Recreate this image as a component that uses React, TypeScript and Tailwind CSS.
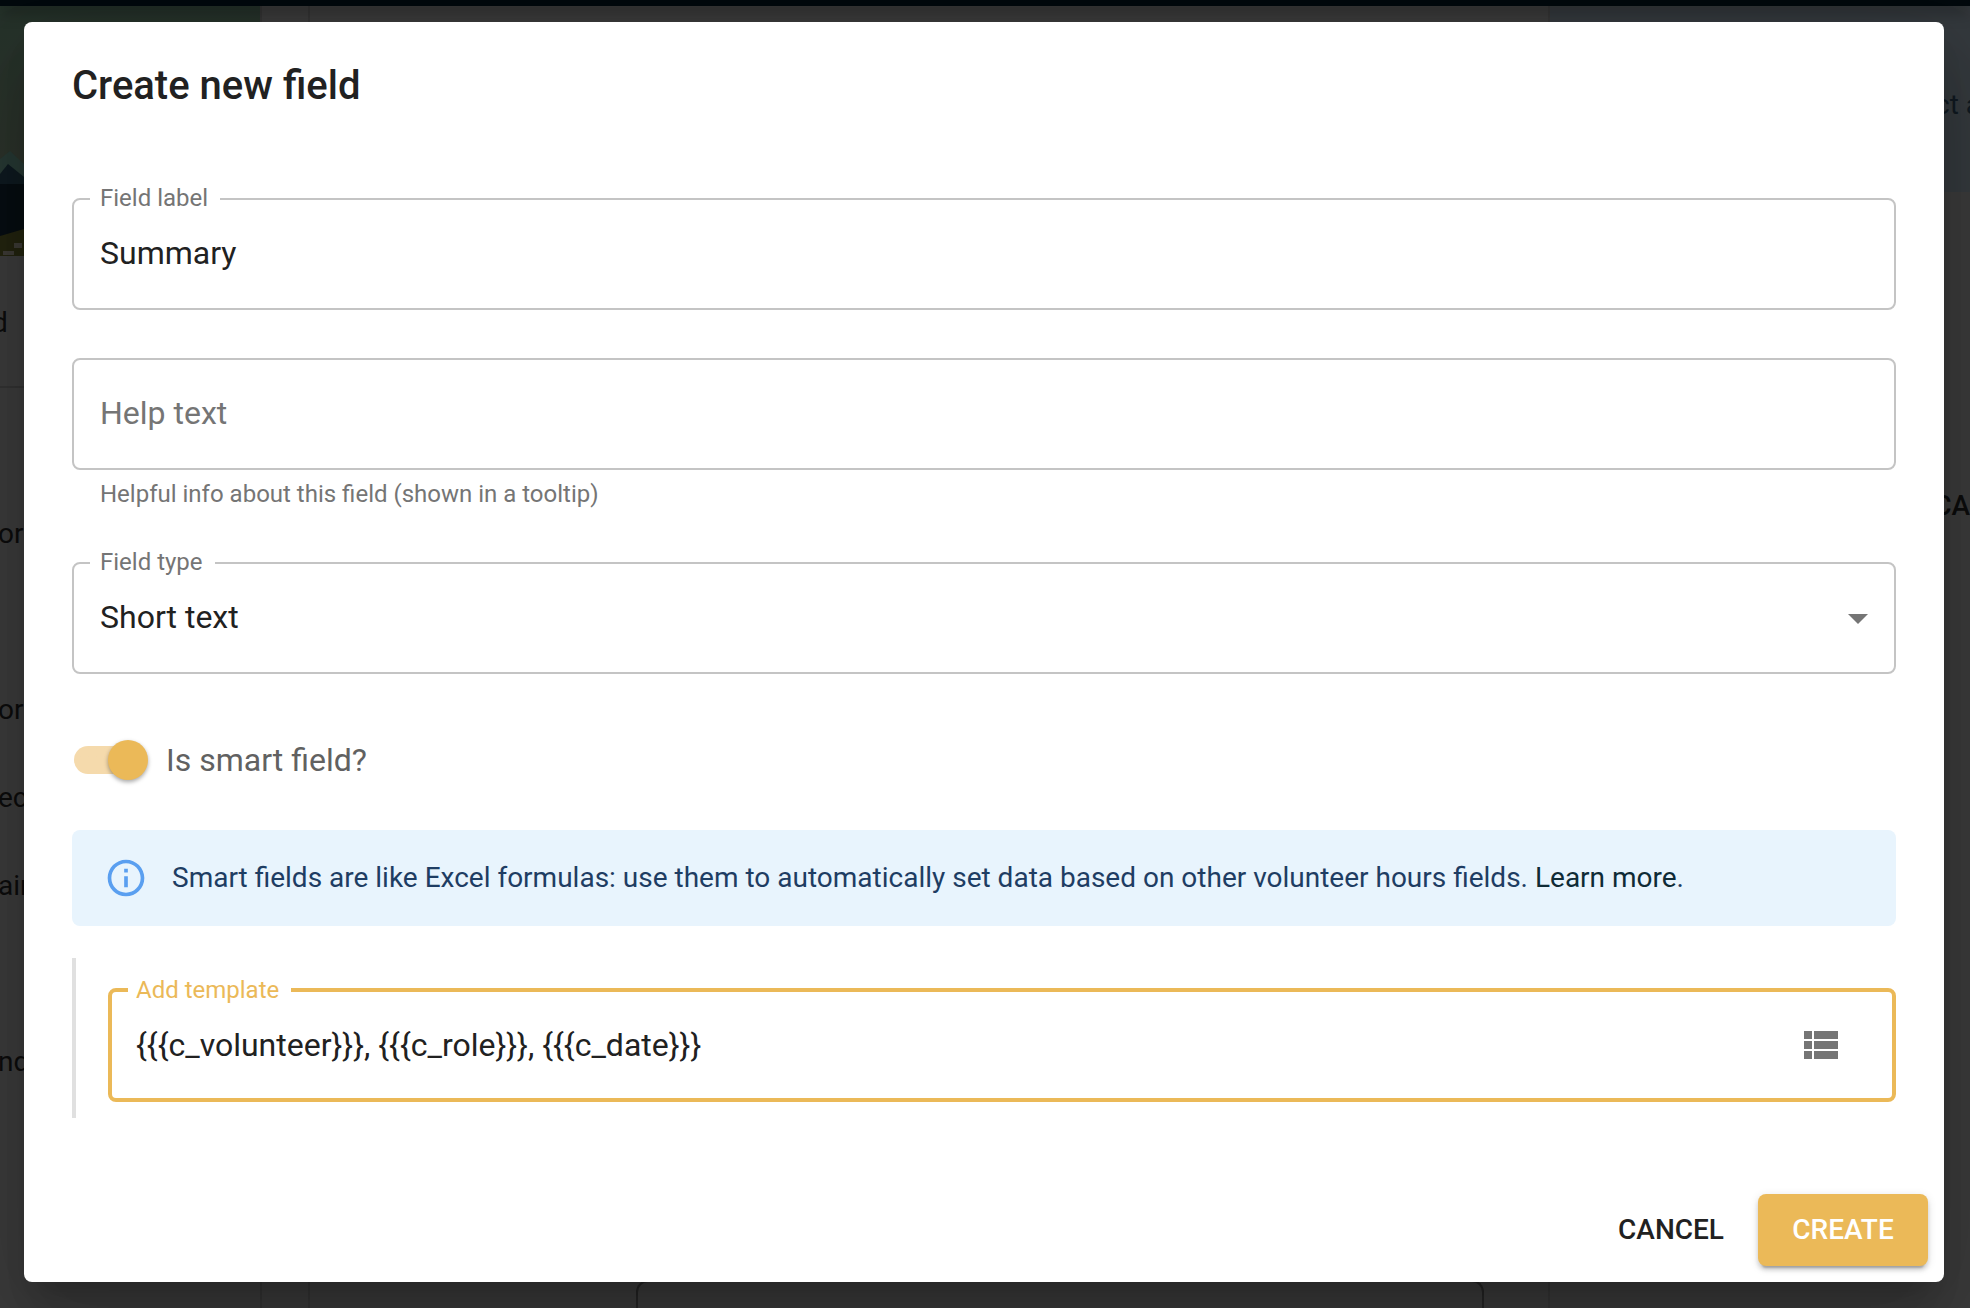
import { useState, type ReactNode } from "react";

const sidebarItems = ["or", "", "or", "ech", "air", "", "nd"];

function Backdrop() {
  return (
    <div aria-hidden="true" className="absolute inset-0 flex flex-col overflow-hidden bg-[#3c3c3c] text-[28px] text-[#0c0c0c]">
      <div className="z-10 h-1.5 shrink-0 bg-[#02090d] shadow-[0_4px_16px_rgba(0,0,0,0.5)]" />
      <div className="flex flex-1">
        <div className="w-[262px] shrink-0 border-r-2 border-[#353535]">
          <svg viewBox="0 0 260 250" className="block h-[250px] w-full" preserveAspectRatio="none">
            <defs>
              <linearGradient id="sky" x1="0" y1="0" x2="0" y2="1">
                <stop offset="0" stopColor="#26332b" />
                <stop offset="1" stopColor="#30332b" />
              </linearGradient>
            </defs>
            <rect width="260" height="250" fill="url(#sky)" />
            <path d="M0 153L10 145L24 158V180H0z" fill="#273934" />
            <path d="M0 168L8 158L24 171V180H0z" fill="#0e1a20" />
            <rect y="178" width="260" height="72" fill="#070d12" />
            <path d="M0 230L24 223V250H0z" fill="#23240f" />
            <path d="M3 245h11v4H3zM14 237h8v5h-8z" fill="#3d3b36" />
          </svg>
          <div className="flex h-[132px] items-center border-b-2 border-[#333333] pt-1 -indent-2">d</div>
          <ul className="pt-[102px] -indent-0.5">
            {sidebarItems.map((item, i) => (
              <li key={i} className="h-[88px] leading-[88px]">{item}</li>
            ))}
          </ul>
        </div>
        <div className="ml-[46px] flex flex-1 items-end justify-end border-l-2 border-[#353535] pr-16">
          <div className="h-7 w-[848px] rounded-t-xl border-2 border-b-0 border-[#262626]" />
        </div>
        <div className="flex w-[422px] flex-col border-l-2 border-[#363636]">
          <div className="h-[186px] bg-[#353a3e] pt-[78px] pl-[385px] whitespace-nowrap text-[#111a22]">ct a</div>
          <div className="pt-[293px] text-right font-medium">CA</div>
        </div>
      </div>
    </div>
  );
}

type FieldProps = {
  id: string;
  label: string;
  children: ReactNode;
};

function OutlinedField({ id, label, children }: FieldProps) {
  return (
    <div className="relative h-28 rounded-lg border-2 border-[#c4c4c4]">
      <label htmlFor={id} className="absolute -top-3.5 left-4 bg-white pr-3 pl-2.5 text-2xl leading-6 text-[#757575]">
        {label}
      </label>
      {children}
    </div>
  );
}

export default function App() {
  const [label, setLabel] = useState("Summary");
  const [help, setHelp] = useState("");
  const [smart, setSmart] = useState(true);
  const [template, setTemplate] = useState("{{{c_volunteer}}}, {{{c_role}}}, {{{c_date}}}");

  return (
    <div className="relative min-h-screen overflow-hidden pt-[22px] pr-[26px] pb-[26px] pl-6 font-['Roboto',sans-serif] text-[#212121]">
      <Backdrop />
      <div
        role="dialog"
        aria-labelledby="dialog-title"
        className="relative z-20 rounded-lg bg-white shadow-[0_22px_30px_-14px_rgba(0,0,0,0.2),0_48px_76px_6px_rgba(0,0,0,0.14),0_18px_92px_16px_rgba(0,0,0,0.12)]"
      >
        <div className="px-12 pt-8">
          <h2 id="dialog-title" className="text-[40px] leading-16 font-medium">Create new field</h2>

          <div className="mt-20 flex flex-col gap-12">
            <OutlinedField id="field-label" label="Field label">
              <input
                id="field-label"
                value={label}
                onChange={(e) => setLabel(e.target.value)}
                className="h-full w-full px-[26px] pb-0.5 text-[32px] outline-none"
              />
            </OutlinedField>

            <div>
              <div className="h-28 rounded-lg border-2 border-[#c4c4c4]">
                <input
                  aria-label="Help text"
                  aria-describedby="help-hint"
                  placeholder="Help text"
                  value={help}
                  onChange={(e) => setHelp(e.target.value)}
                  className="h-full w-full px-[26px] pb-0.5 text-[32px] outline-none placeholder:text-[#757575]"
                />
              </div>
              <p id="help-hint" className="mt-1 px-7 text-2xl leading-10 text-[#757575]">
                Helpful info about this field (shown in a tooltip)
              </p>
            </div>

            <OutlinedField id="field-type" label="Field type">
              <select id="field-type" className="h-full w-full appearance-none px-[26px] pb-0.5 text-[32px] outline-none">
                <option>Short text</option>
              </select>
              <svg viewBox="0 0 24 24" className="pointer-events-none absolute top-[30px] right-3 size-12 fill-[#757575]">
                <path d="M7 10l5 5 5-5z" />
              </svg>
            </OutlinedField>

            <label className="flex h-[76px] items-center text-[32px] text-[#616161]">
              <input
                type="checkbox"
                role="switch"
                checked={smart}
                onChange={(e) => setSmart(e.target.checked)}
                className="peer sr-only"
              />
              <span className="ml-0.5 flex h-7 w-[74px] items-center rounded-full bg-linear-to-r from-[#f5daac] from-[68px] to-transparent to-[68px] peer-checked:justify-end">
                <span className="size-10 rounded-full bg-[#ebb958] shadow-[0_2px_4px_rgba(0,0,0,0.35)]" />
              </span>
              <span className="ml-[18px]">Is smart field?</span>
            </label>
          </div>

          <div className="mt-8 flex min-h-24 items-center gap-6 rounded-lg bg-[#e8f4fd] px-8 text-[28px] text-[#1e3d63]">
            <svg viewBox="0 0 24 24" className="size-11 shrink-0 fill-[#5a9ff0]">
              <path d="M11 7h2v2h-2zM11 11h2v6h-2zM12 2C6.48 2 2 6.48 2 12s4.48 10 10 10 10-4.48 10-10S17.52 2 12 2zm0 18c-4.41 0-8-3.59-8-8s3.59-8 8-8 8 3.59 8 8-3.59 8-8 8z" />
            </svg>
            <p>
              Smart fields are like Excel formulas: use them to automatically set data based on other volunteer hours fields.{" "}
              <a href="#" className="text-[#0f2b36]">Learn more</a>.
            </p>
          </div>

          <div className="mt-8 border-l-4 border-[#e0e0e0] pt-[30px] pb-4 pl-8">
            <div className="relative flex h-[114px] items-center rounded-lg border-4 border-[#ebb958] pr-12">
              <label htmlFor="template" className="absolute -top-4 left-4 bg-white pr-3 pl-2 text-2xl leading-7 text-[#ebb958]">
                Add template
              </label>
              <input
                id="template"
                value={template}
                onChange={(e) => setTemplate(e.target.value)}
                className="h-full min-w-0 flex-1 px-6 text-[32px] outline-none"
              />
              <button type="button" aria-label="Insert field">
                <svg viewBox="0 0 24 24" className="size-12 fill-[#757575]">
                  <path d="M4 14h4v-4H4v4zm0 5h4v-4H4v4zM4 9h4V5H4v4zm5 5h12v-4H9v4zm0 5h12v-4H9v4zM9 5v4h12V5H9z" />
                </svg>
              </button>
            </div>
          </div>
        </div>

        <div className="mt-[76px] flex justify-end gap-4 px-4 pb-4 text-[28px] font-medium">
          <button type="button" className="h-[72px] min-w-[142px] rounded-lg px-4">CANCEL</button>
          <button
            type="button"
            className="h-[72px] min-w-[170px] rounded-lg bg-[#ebb958] px-8 text-white shadow-[0_6px_2px_-4px_rgba(0,0,0,0.2),0_4px_4px_rgba(0,0,0,0.14),0_2px_10px_rgba(0,0,0,0.12)]"
          >
            CREATE
          </button>
        </div>
      </div>
    </div>
  );
}
